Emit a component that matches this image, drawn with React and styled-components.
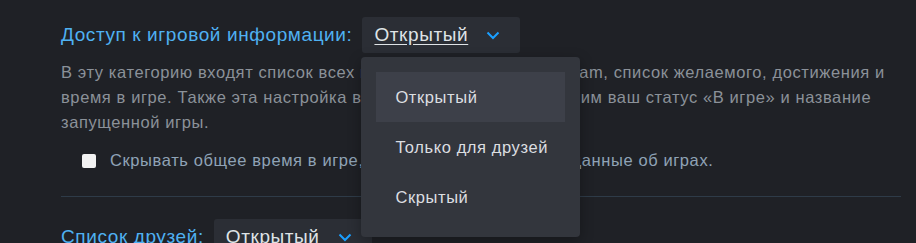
import React from "react";
import styled, { createGlobalStyle } from "styled-components";

const GlobalStyle = createGlobalStyle`
  html, body { margin: 0; padding: 0; background: #1f2126; }
  body { font-family: "Liberation Sans", Arial, sans-serif; }
`;

const Page = styled.div`
  width: 916px;
  height: 243px;
  overflow: hidden;
  box-sizing: border-box;
  padding: 17px 0 0 61px;
  background: #1f2126;
`;

const Section = styled.section`
  display: flex;
  flex-direction: column;
`;

const Row = styled.div`
  display: flex;
  align-items: center;
  gap: 10px;
`;

const Label = styled.span`
  font-size: 19px;
  letter-spacing: 0.6px;
  color: #4fb1f2;
  white-space: nowrap;
`;

const SelectWrap = styled.div`
  position: relative;
`;

const SelectButton = styled.div`
  box-sizing: border-box;
  width: 158px;
  height: 36px;
  display: flex;
  align-items: center;
  padding: 0 20px 0 12px;
  background: #2b2e35;
  border-radius: 3px;
  font-size: 19px;
  letter-spacing: 0.6px;
  color: #dfe3e6;
`;

const SelectText = styled.span`
  text-decoration: ${(p) => (p.$focused ? "underline" : "none")};
  text-underline-offset: 3px;
`;

const Chevron = styled.svg`
  margin-left: auto;
  width: 14px;
  height: 9px;
`;

const Menu = styled.div`
  position: absolute;
  top: 40px;
  left: -1px;
  width: 219px;
  box-sizing: border-box;
  padding: 15px;
  background: #33363d;
  border-radius: 4px;
  box-shadow: 0 4px 14px rgba(0, 0, 0, 0.3);
  z-index: 5;
`;

const MenuItem = styled.div`
  height: 50px;
  display: flex;
  align-items: center;
  padding-left: 19px;
  font-size: 16.5px;
  letter-spacing: 0.6px;
  color: #dcdee1;
  background: ${(p) => (p.$active ? "#3d4049" : "transparent")};
`;

const Description = styled.p`
  margin: 7px 0 0;
  width: 830px;
  font-size: 16.5px;
  letter-spacing: 0.6px;
  line-height: 25px;
  color: #8b9199;
`;

const CheckRow = styled.label`
  display: flex;
  align-items: center;
  margin-top: 13px;
  padding-left: 21px;
  height: 25px;
  font-size: 16.5px;
  letter-spacing: 0.6px;
  color: #8fa3b6;
  white-space: nowrap;
`;

const Checkbox = styled.input`
  appearance: none;
  flex: none;
  width: 14px;
  height: 14px;
  margin: 0 14px 0 0;
  background: #f2f2f2;
  border-radius: 2px;
`;

const Divider = styled.hr`
  margin: 23px 0 0;
  width: 840px;
  border: none;
  height: 1px;
  background: #2e3b48;
`;

const SecondRow = styled(Row)`
  margin-top: 22px;
`;

const ChevronIcon = () => (
  <Chevron viewBox="0 0 14 9">
    <path d="M1.5 1.5 L7 7 L12.5 1.5" fill="none" stroke="#1a9fff" strokeWidth="2" />
  </Chevron>
);

const options = ["Открытый", "Только для друзей", "Скрытый"];

export default function App() {
  return (
    <Page>
      <GlobalStyle />
      <Section>
        <Row>
          <Label>Доступ к игровой информации:</Label>
          <SelectWrap>
            <SelectButton>
              <SelectText $focused>Открытый</SelectText>
              <ChevronIcon />
            </SelectButton>
            <Menu>
              {options.map((o, i) => (
                <MenuItem key={o} $active={i === 0}>{o}</MenuItem>
              ))}
            </Menu>
          </SelectWrap>
        </Row>
        <Description>
          В эту категорию входят список всех игр на вашем аккаунте Steam, список желаемого, достижения и время в игре. Также эта настройка влияет на то, видно ли другим ваш статус «В игре» и название запущенной игры.
        </Description>
        <CheckRow>
          <Checkbox type="checkbox" />
          Скрывать общее время в игре, даже если другие видят данные об играх.
        </CheckRow>
        <Divider />
        <SecondRow>
          <Label>Список друзей:</Label>
          <SelectButton>
            <SelectText>Открытый</SelectText>
            <ChevronIcon />
          </SelectButton>
        </SecondRow>
      </Section>
    </Page>
  );
}
